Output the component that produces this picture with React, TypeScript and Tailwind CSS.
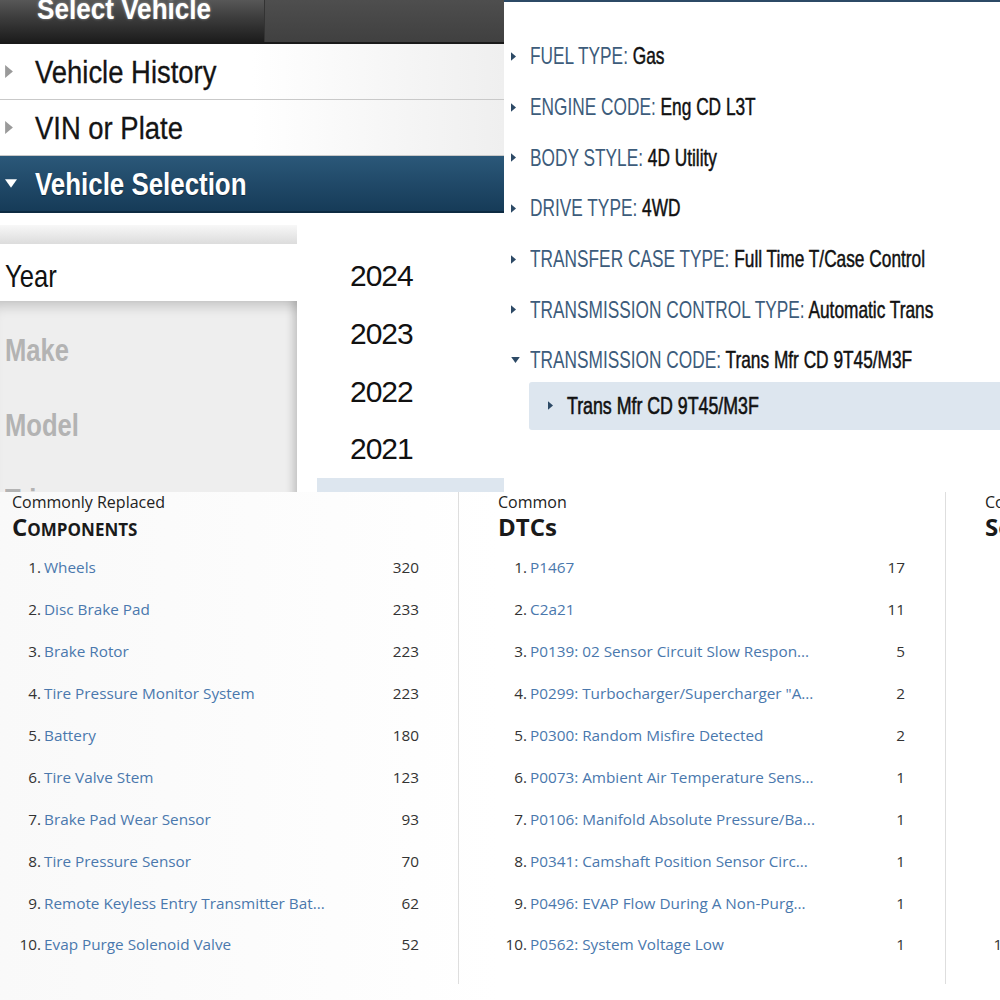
import React from 'react';

const arial = { fontFamily: '"Liberation Sans", Arial, sans-serif' };
const openSans = { fontFamily: '"Open Sans", "Noto Sans", sans-serif' };

const specs = [
  { label: 'FUEL TYPE:', value: 'Gas' },
  { label: 'ENGINE CODE:', value: 'Eng CD L3T' },
  { label: 'BODY STYLE:', value: '4D Utility' },
  { label: 'DRIVE TYPE:', value: '4WD' },
  { label: 'TRANSFER CASE TYPE:', value: 'Full Time T/Case Control' },
  { label: 'TRANSMISSION CONTROL TYPE:', value: 'Automatic Trans' },
  { label: 'TRANSMISSION CODE:', value: 'Trans Mfr CD 9T45/M3F', open: true },
];

const components = [
  ['Wheels', 320],
  ['Disc Brake Pad', 233],
  ['Brake Rotor', 223],
  ['Tire Pressure Monitor System', 223],
  ['Battery', 180],
  ['Tire Valve Stem', 123],
  ['Brake Pad Wear Sensor', 93],
  ['Tire Pressure Sensor', 70],
  ['Remote Keyless Entry Transmitter Bat...', 62],
  ['Evap Purge Solenoid Valve', 52],
] as const;

const dtcs = [
  ['P1467', 17],
  ['C2a21', 11],
  ['P0139: 02 Sensor Circuit Slow Respon...', 5],
  ['P0299: Turbocharger/Supercharger "A...', 2],
  ['P0300: Random Misfire Detected', 2],
  ['P0073: Ambient Air Temperature Sens...', 1],
  ['P0106: Manifold Absolute Pressure/Ba...', 1],
  ['P0341: Camshaft Position Sensor Circ...', 1],
  ['P0496: EVAP Flow During A Non-Purg...', 1],
  ['P0562: System Voltage Low', 1],
] as const;

const RightTri = ({ className }: { className: string }) => (
  <svg viewBox="0 0 6 10" className={className}>
    <path d="M0 0 L6 5 L0 10 Z" fill="currentColor" />
  </svg>
);

const DownTri = ({ className }: { className: string }) => (
  <svg viewBox="0 0 10 7" className={className}>
    <path d="M0 0 L10 0 L5 7 Z" fill="currentColor" />
  </svg>
);

const NavRow = ({ label, active }: { label: string; active?: boolean }) => (
  <div
    className={
      active
        ? 'flex h-[57px] shrink-0 items-center border-b-2 border-[#0d2b42] bg-gradient-to-b from-[#2b5879] to-[#163b58] text-white'
        : 'flex h-[56px] shrink-0 items-center border-b border-[#c9c9c9] bg-gradient-to-r from-white via-white to-[#efefef] text-[#141414]'
    }
  >
    {active ? (
      <DownTri className="ml-[5px] h-[9px] w-[12px] shrink-0 text-white" />
    ) : (
      <RightTri className="ml-[5px] h-[13px] w-[8px] shrink-0 text-[#9a9a9a]" />
    )}
    <span
      className={
        active
          ? 'ml-[18px] mt-[3px] inline-block origin-left scale-x-[0.835] whitespace-nowrap text-[31px] font-bold'
          : 'ml-[22px] mt-[3px] inline-block origin-left scale-x-[0.885] whitespace-nowrap text-[31px] [-webkit-text-stroke:0.3px_#141414]'
      }
      style={{ ...arial, textShadow: active ? '0 1px 1px rgba(0,0,0,0.4)' : 'none' }}
    >
      {label}
    </span>
  </div>
);

const ListColumn = ({
  small,
  title,
  rows,
  className,
}: {
  small: string;
  title: React.ReactNode;
  rows: readonly (readonly [string, number])[];
  className: string;
}) => (
  <div className={className} style={openSans}>
    <div className="h-[20px] text-[16px] leading-[20px] text-[#222]">{small}</div>
    <div className="h-[35px] text-[24px] font-bold leading-[30px] text-[#1a1a1a]">{title}</div>
    <ol>
      {rows.map(([name, count], i) => (
        <li key={name} className="flex h-[41.9px] items-center whitespace-nowrap text-[15.3px]">
          <span className="w-[29px] shrink-0 text-right text-[#333]">{i + 1}.</span>
          <span className="ml-[3px] flex-1 text-[#4a78ad]">{name}</span>
          <span className="text-[#333]">{count}</span>
        </li>
      ))}
    </ol>
  </div>
);

export default function App() {
  return (
    <div className="h-[1000px] w-[1000px] overflow-hidden bg-white">
      {/* top half: selector + vehicle specs */}
      <div className="flex h-[492px]">
        <div className="flex w-[504px] shrink-0 flex-col overflow-hidden bg-white">
          <div className="flex h-[44px] shrink-0 border-b-2 border-[#1a1a1a] bg-[#4a4a4a]">
            <div className="h-full w-[265px] overflow-hidden border-r border-[#333] bg-gradient-to-b from-[#575757] to-[#1c1c1c]">
              <div
                className="ml-[37px] mt-[-6px] inline-block origin-left scale-x-[0.87] whitespace-nowrap text-[30px] font-bold leading-[30px] text-white"
                style={{ ...arial, textShadow: '0 0 3px rgba(255,255,255,0.45)' }}
              >
                Select Vehicle
              </div>
            </div>
            <div className="h-full flex-1 bg-gradient-to-b from-[#4e4e4e] to-[#404040]" />
          </div>
          <NavRow label="Vehicle History" />
          <NavRow label="VIN or Plate" />
          <NavRow label="Vehicle Selection" active />

          <div className="flex min-h-0 flex-1">
            <div className="flex w-[297px] shrink-0 flex-col overflow-hidden">
              <div className="mt-[12px] h-[19px] shrink-0 bg-gradient-to-b from-[#f8f8f8] to-[#dcdcdc]" />
              <div className="flex h-[57px] shrink-0 items-center pl-[5px] pt-[6px]">
                <span className="inline-block origin-left scale-x-[0.8] text-[32px] text-[#111]" style={arial}>
                  Year
                </span>
              </div>
              <div className="flex-1 bg-[#eeeeee] pt-[11px] shadow-[inset_-9px_0_9px_-5px_rgba(0,0,0,0.18),inset_0_14px_12px_-8px_rgba(0,0,0,0.16)]">
                {['Make', 'Model', 'Trim'].map((t) => (
                  <div key={t} className="flex h-[75px] items-center pl-[5px]">
                    <span className="inline-block origin-left scale-x-[0.8] text-[32px] font-bold text-[#b3b3b3]" style={arial}>
                      {t}
                    </span>
                  </div>
                ))}
              </div>
            </div>
            <div className="ml-[20px] flex flex-1 flex-col overflow-hidden pt-[34px]">
              {['2024', '2023', '2022', '2021'].map((y) => (
                <div
                  key={y}
                  className="flex h-[57.7px] shrink-0 items-center pl-[33px] text-[30px] tracking-[-1px] text-[#111]"
                  style={arial}
                >
                  {y}
                </div>
              ))}
              <div className="h-[58px] shrink-0 bg-[#dde6ef]" />
            </div>
          </div>
        </div>

        <div className="flex-1 overflow-hidden border-t-2 border-[#2c4a66] bg-white pt-[29px]" style={arial}>
          {specs.map((s) => (
            <div key={s.label} className="flex h-[50.7px] items-center whitespace-nowrap">
              {s.open ? (
                <DownTri className="ml-[7px] mr-[10px] h-[6px] w-[9px] shrink-0 text-[#2d4a66]" />
              ) : (
                <RightTri className="ml-[7px] mr-[14px] h-[9px] w-[5px] shrink-0 text-[#2d4a66]" />
              )}
              <span className="inline-block origin-left scale-x-[0.72] text-[24px]">
                <span className="text-[#3d5c7b]">{s.label}</span>
                <span className="text-[#111] [-webkit-text-stroke:0.5px_#111]"> {s.value}</span>
              </span>
            </div>
          ))}
          <div className="ml-[25px] mt-[-4px] flex h-[48px] items-center whitespace-nowrap rounded-l-[3px] bg-[#dde6ef] text-[#111]">
            <RightTri className="ml-[19px] mr-[14px] h-[9px] w-[5px] shrink-0 text-[#2d4a66]" />
            <span className="inline-block origin-left scale-x-[0.74] text-[24px] [-webkit-text-stroke:0.6px_#111]">
              Trans Mfr CD 9T45/M3F
            </span>
          </div>
        </div>
      </div>

      {/* bottom half: top lists */}
      <div className="flex h-[508px] overflow-hidden bg-gradient-to-r from-[#f9f9f9] via-white to-white">
        <ListColumn
          className="h-[492px] w-[459px] shrink-0 border-r border-[#dedede] pl-[12px] pr-[39px]"
          small="Commonly Replaced"
          title={<span style={{ fontVariant: 'small-caps' }}>Components</span>}
          rows={components}
        />
        <ListColumn
          className="h-[492px] w-[487px] shrink-0 border-r border-[#dedede] pl-[39px] pr-[40px]"
          small="Common"
          title="DTCs"
          rows={dtcs}
        />
        <div className="w-[400px] shrink-0 whitespace-nowrap pl-[39px]" style={openSans}>
          <div className="h-[20px] text-[16px] leading-[20px] text-[#222]">Common</div>
          <div className="h-[35px] text-[24px] font-bold leading-[30px] text-[#1a1a1a]">Services</div>
          {Array.from({ length: 10 }, (_, i) => (
            <div key={i} className="flex h-[41.9px] items-center text-[15.3px] text-[#333]">
              <span className="w-[30px] shrink-0 text-right">{i + 1}.</span>
            </div>
          ))}
        </div>
      </div>
    </div>
  );
}
